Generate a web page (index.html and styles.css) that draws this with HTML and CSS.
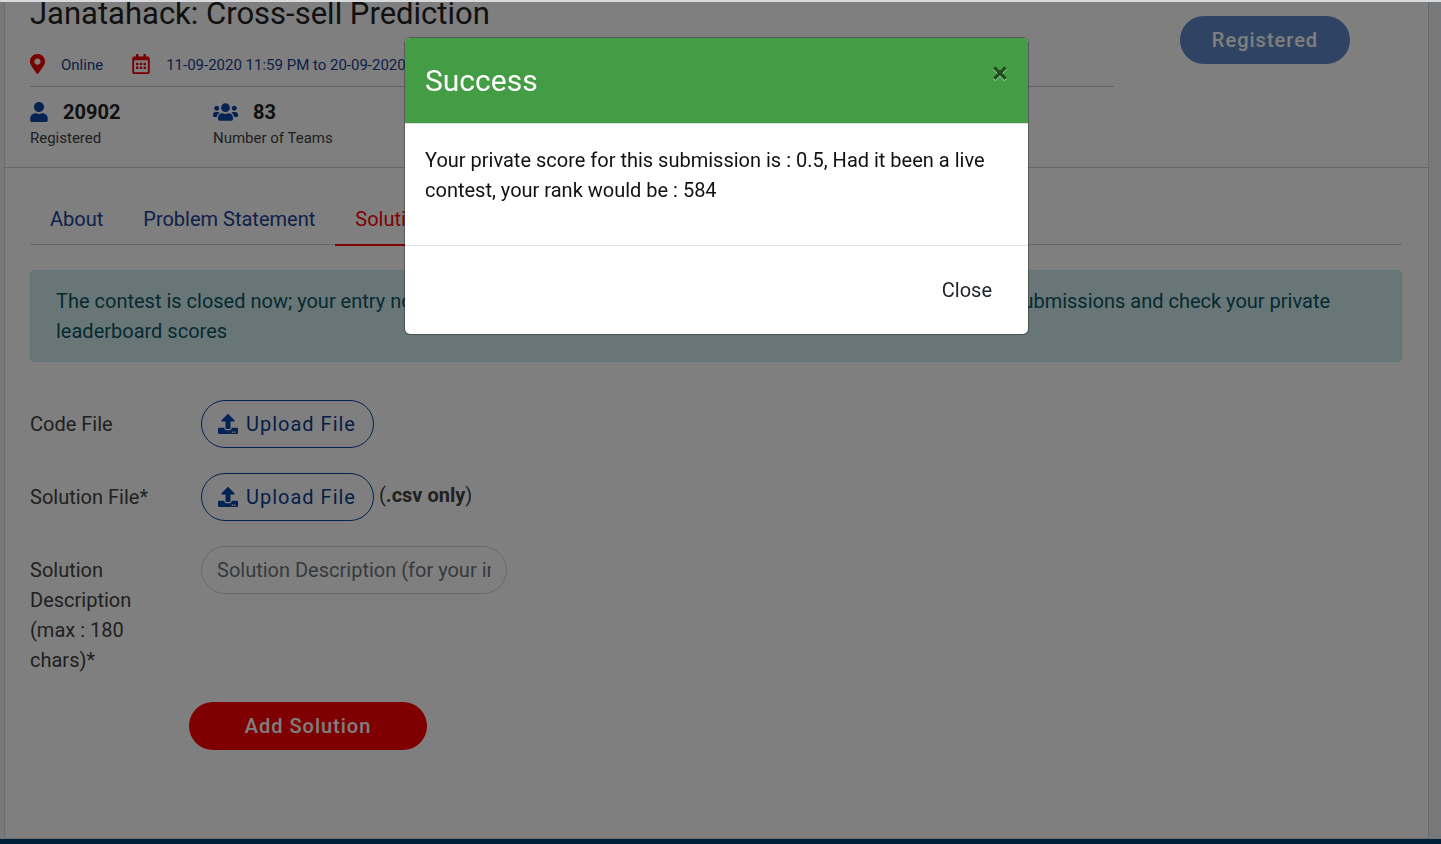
FILE: index.html
```html
<!DOCTYPE html>
<html lang="en">
<head>
<meta charset="utf-8">
<meta name="viewport" content="width=device-width, initial-scale=1">
<title>Janatahack: Cross-sell Prediction</title>
<link rel="stylesheet" href="styles.css">
</head>
<body>
<main class="contest">
  <header class="contest-header">
    <div class="summary">
      <h1 class="contest-title">Janatahack: Cross-sell Prediction</h1>
      <div class="meta">
        <span class="meta-item">
          <svg class="icon icon-pin" viewBox="0 0 384 512" aria-hidden="true"><path d="M172.268 501.67C26.97 291.031 0 269.413 0 192 0 85.961 85.961 0 192 0s192 85.961 192 192c0 77.413-26.97 99.031-172.268 309.67-9.535 13.774-29.93 13.773-39.464 0zM192 272c44.183 0 80-35.817 80-80s-35.817-80-80-80-80 35.817-80 80 35.817 80 80 80z"/></svg>
          <span>Online</span>
        </span>
        <span class="meta-item">
          <svg class="icon icon-calendar" viewBox="0 0 448 512" aria-hidden="true"><path d="M148 288h-40c-6.600 0-12-5.400-12-12v-40c0-6.600 5.400-12 12-12h40c6.600 0 12 5.400 12 12v40c0 6.600-5.400 12-12 12zm108-12v-40c0-6.600-5.400-12-12-12h-40c-6.600 0-12 5.400-12 12v40c0 6.600 5.400 12 12 12h40c6.600 0 12-5.400 12-12zm96 0v-40c0-6.600-5.400-12-12-12h-40c-6.600 0-12 5.400-12 12v40c0 6.600 5.400 12 12 12h40c6.600 0 12-5.400 12-12zm-96 96v-40c0-6.600-5.400-12-12-12h-40c-6.600 0-12 5.400-12 12v40c0 6.600 5.400 12 12 12h40c6.600 0 12-5.400 12-12zm-96 0v-40c0-6.600-5.400-12-12-12h-40c-6.600 0-12 5.400-12 12v40c0 6.600 5.400 12 12 12h40c6.600 0 12-5.400 12-12zm192 0v-40c0-6.600-5.400-12-12-12h-40c-6.600 0-12 5.400-12 12v40c0 6.600 5.400 12 12 12h40c6.600 0 12-5.400 12-12zm96-260v352c0 26.500-21.500 48-48 48H48c-26.500 0-48-21.500-48-48V112c0-26.500 21.500-48 48-48h48V12c0-6.600 5.400-12 12-12h40c6.600 0 12 5.400 12 12v52h128V12c0-6.600 5.400-12 12-12h40c6.600 0 12 5.400 12 12v52h48c26.500 0 48 21.500 48 48zm-48 346V160H48v298c0 3.300 2.700 6 6 6h340c3.300 0 6-2.700 6-6z"/></svg>
          <span>11-09-2020 11:59 PM to 20-09-2020 11:59 PM</span>
        </span>
      </div>
      <div class="stats">
        <div class="stat">
          <div class="stat-value">
            <svg class="icon icon-user" viewBox="0 0 448 512" aria-hidden="true"><path d="M224 256c70.700 0 128-57.300 128-128S294.700 0 224 0 96 57.300 96 128s57.300 128 128 128zm89.600 32h-16.700c-22.200 10.200-46.900 16-72.900 16s-50.600-5.800-72.900-16h-16.700C60.200 288 0 348.200 0 422.400V464c0 26.500 21.500 48 48 48h352c26.500 0 48-21.500 48-48v-41.600c0-74.200-60.200-134.400-134.400-134.400z"/></svg>
            <span>20902</span>
          </div>
          <div class="stat-label">Registered</div>
        </div>
        <div class="stat">
          <div class="stat-value">
            <svg class="icon icon-users" viewBox="0 0 640 512" aria-hidden="true"><path d="M96 224c35.300 0 64-28.700 64-64s-28.700-64-64-64-64 28.700-64 64 28.700 64 64 64zm448 0c35.300 0 64-28.700 64-64s-28.700-64-64-64-64 28.700-64 64 28.700 64 64 64zm32 32h-64c-17.600 0-33.500 7.100-45.100 18.600 40.300 22.100 68.900 62 75.100 109.400h66c17.700 0 32-14.300 32-32v-32c0-35.300-28.700-64-64-64zm-256 0c61.900 0 112-50.100 112-112S381.900 32 320 32 208 82.100 208 144s50.100 112 112 112zm76.800 32h-8.300c-20.800 10-43.900 16-68.500 16s-47.600-6-68.500-16h-8.300C179.600 288 128 339.600 128 403.200V432c0 26.500 21.500 48 48 48h288c26.500 0 48-21.500 48-48v-28.800c0-63.600-51.600-115.200-115.200-115.200zm-223.700-13.400C161.500 263.100 145.600 256 128 256H64c-35.300 0-64 28.700-64 64v32c0 17.700 14.300 32 32 32h65.900c6.300-47.400 34.900-87.300 75.200-109.400z"/></svg>
            <span>83</span>
          </div>
          <div class="stat-label">Number of Teams</div>
        </div>
      </div>
    </div>
    <div class="action">
      <button class="btn btn-registered" type="button" disabled>Registered</button>
    </div>
  </header>

  <section class="content">
    <nav class="tabs">
      <a class="tab" href="#about">About</a>
      <a class="tab" href="#problem">Problem Statement</a>
      <a class="tab tab-active" href="#solution">Solution Checker</a>
    </nav>

    <div class="alert">The contest is closed now; your entry now would not be considered for leaderboard. You can still make your submissions and check your private leaderboard scores</div>

    <form class="form">
      <div class="row">
        <label class="label" for="code-file">Code File</label>
        <button class="btn btn-upload" id="code-file" type="button">
          <svg class="icon icon-upload" viewBox="0 0 512 512" aria-hidden="true"><path d="M296 384h-80c-13.300 0-24-10.700-24-24V192h-87.700c-17.800 0-26.700-21.500-14.100-34.100L242.300 5.700c7.500-7.500 19.800-7.500 27.300 0l152.200 152.200c12.600 12.600 3.700 34.100-14.100 34.100H320v168c0 13.300-10.700 24-24 24zm216-8v112c0 13.300-10.700 24-24 24H24c-13.300 0-24-10.700-24-24V376c0-13.300 10.700-24 24-24h136v8c0 30.900 25.100 56 56 56h80c30.900 0 56-25.100 56-56v-8h136c13.300 0 24 10.700 24 24zm-124 88c0-11-9-20-20-20s-20 9-20 20 9 20 20 20 20-9 20-20zm64 0c0-11-9-20-20-20s-20 9-20 20 9 20 20 20 20-9 20-20z"/></svg>
          <span>Upload File</span>
        </button>
      </div>
      <div class="row">
        <label class="label" for="solution-file">Solution File*</label>
        <button class="btn btn-upload" id="solution-file" type="button">
          <svg class="icon icon-upload" viewBox="0 0 512 512" aria-hidden="true"><path d="M296 384h-80c-13.300 0-24-10.700-24-24V192h-87.700c-17.800 0-26.700-21.500-14.100-34.100L242.300 5.700c7.500-7.500 19.800-7.500 27.300 0l152.200 152.200c12.600 12.600 3.700 34.100-14.100 34.100H320v168c0 13.300-10.700 24-24 24zm216-8v112c0 13.300-10.700 24-24 24H24c-13.300 0-24-10.700-24-24V376c0-13.300 10.700-24 24-24h136v8c0 30.900 25.100 56 56 56h80c30.900 0 56-25.100 56-56v-8h136c13.300 0 24 10.700 24 24zm-124 88c0-11-9-20-20-20s-20 9-20 20 9 20 20 20 20-9 20-20zm64 0c0-11-9-20-20-20s-20 9-20 20 9 20 20 20 20-9 20-20z"/></svg>
          <span>Upload File</span>
        </button>
        <span class="hint">(<b>.csv only</b>)</span>
      </div>
      <div class="row">
        <label class="label" for="description">Solution Description (max : 180 chars)*</label>
        <input class="text-input" id="description" type="text" maxlength="180" placeholder="Solution Description (for your internal use)">
      </div>
      <button class="btn btn-submit" type="submit">Add Solution</button>
    </form>
  </section>
</main>
<footer class="site-footer"></footer>

<div class="overlay">
  <div class="modal" role="dialog" aria-modal="true" aria-labelledby="modal-title">
    <div class="modal-header">
      <h2 class="modal-title" id="modal-title">Success</h2>
      <button class="modal-dismiss" type="button" aria-label="Dismiss">×</button>
    </div>
    <div class="modal-body">Your private score for this submission is : 0.5, Had it been a live contest, your rank would be : 584</div>
    <div class="modal-footer">
      <button class="modal-close" type="button">Close</button>
    </div>
  </div>
</div>
</body>
</html>
```
FILE: styles.css
```css
* { box-sizing: border-box; }

body {
  margin: 0;
  min-height: 100vh;
  display: flex;
  flex-direction: column;
  border-top: 2px solid #d9dadd;
  background: #eff1f5;
  color: #424242;
  font: 400 20px/30px Roboto, "Liberation Sans", sans-serif;
}

button, input { font: inherit; }

.contest {
  flex: 1;
  margin: 0 12px 0 4px;
  border: 1px solid #d4d6d9;
  border-top: 0;
  background: #fff;
}

/* Header */
.contest-header {
  display: flex;
  padding: 0 0 18px 25px;
  border-bottom: 1px solid #d0d0d0;
}

.summary { flex: 1; }

.contest-title {
  margin: 0;
  color: #222;
  font-size: 31px;
  font-weight: 400;
  line-height: 24px;
}

.meta {
  display: flex;
  gap: 29px;
  padding: 23px 0 5px;
  border-bottom: 1px solid #c8c8c8;
  color: #1c3f94;
  font-size: 15px;
  line-height: 32px;
}

.meta-item {
  display: flex;
  align-items: center;
  gap: 16px;
}

.icon {
  display: block;
  flex: none;
  height: 20px;
  fill: #0a47a5;
}

.meta .icon { margin-bottom: 3px; fill: #f00000; }

.icon-pin { width: 15px; }
.icon-calendar { width: 18px; }
.icon-user { width: 18px; }
.icon-users { width: 25px; }
.icon-upload { width: 20px; }

.stats { display: flex; padding-top: 10px; }
.stat { width: 183px; }

.stat-value {
  display: flex;
  align-items: center;
  gap: 15px;
  color: #222;
  font-weight: 700;
}

.stat-label { font-size: 15px; line-height: 22px; }

.action { width: 314px; padding: 14px 0 0 66px; }

/* Buttons */
.btn {
  height: 48px;
  border: 0;
  border-radius: 24px;
  letter-spacing: 1px;
}

.btn-registered {
  width: 170px;
  background: #0a47a5;
  color: #fff;
  font-weight: 500;
  opacity: 0.65;
}

.btn-upload {
  display: flex;
  align-items: center;
  gap: 8px;
  width: 173px;
  padding: 0 16px;
  border: 1px solid #0a47a5;
  background: transparent;
  color: #0a3d91;
}

.btn-submit {
  width: 238px;
  margin: 2px 0 0 159px;
  background: #f00;
  color: #fff;
  font-weight: 500;
}

/* Content */
.content { padding: 29px 26px 80px 25px; }

.tabs {
  display: flex;
  border-bottom: 1px solid #d0d0d0;
}

.tab {
  margin-bottom: -2px;
  padding: 7px 20px 10px;
  border-bottom: 2px solid transparent;
  color: #1c3f94;
  text-decoration: none;
}

.tab-active { border-color: #f00; color: #f00; }

.alert {
  margin-top: 25px;
  padding: 15px 25px;
  border: 1px solid #bee5eb;
  border-radius: 5px;
  background: #d1ecf1;
  color: #0c5460;
}

.form {
  display: flex;
  flex-direction: column;
  align-items: flex-start;
  gap: 25px;
  padding-top: 38px;
}

.row { display: flex; align-items: flex-start; }

.label {
  width: 171px;
  padding: 9px 50px 0 0;
}

.hint { padding: 7px 0 0 5px; }

.text-input {
  width: 306px;
  height: 48px;
  padding: 0 15px;
  border: 1px solid #ced4da;
  border-radius: 24px;
  background: transparent;
  color: #495057;
}

.text-input::placeholder { color: #6c757d; opacity: 1; }

.site-footer { height: 5px; background: #004074; }

/* Modal */
.overlay {
  position: fixed;
  inset: 2px 0 0;
  padding: 35px 8px 0 0;
  background: rgba(0, 0, 0, 0.5);
}

.modal {
  max-width: 625px;
  margin: 0 auto;
  border: 1px solid rgba(0, 0, 0, 0.3);
  border-radius: 6px;
  background: #fff;
  background-clip: padding-box;
  color: #111;
}

.modal-header {
  display: flex;
  align-items: flex-start;
  justify-content: space-between;
  padding: 20px;
  border-bottom: 1px solid #dee2e6;
  border-radius: 5px 5px 0 0;
  background: #449d44;
  background-clip: padding-box;
}

.modal-title {
  margin: 0;
  color: #fff;
  font-size: 30px;
  font-weight: 400;
  line-height: 45px;
}

.modal-dismiss {
  padding: 0;
  border: 0;
  background: none;
  color: #000;
  font-size: 30px;
  font-weight: 700;
  line-height: 30px;
  text-shadow: 0 1px 0 #fff;
  opacity: 0.5;
}

.modal-body { padding: 21px 20px 40px; }

.modal-footer {
  display: flex;
  justify-content: flex-end;
  padding: 20px;
  border-top: 1px solid #dee2e6;
}

.modal-close {
  height: 48px;
  padding: 0 16px;
  border: 0;
  background: none;
  color: #212529;
}
```
